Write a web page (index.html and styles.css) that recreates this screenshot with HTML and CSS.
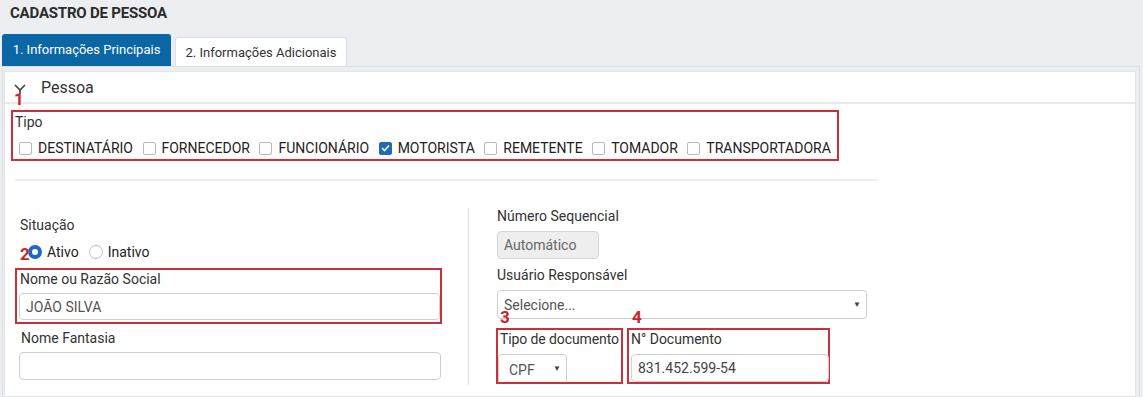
FILE: index.html
```html
<!DOCTYPE html>
<html lang="pt">
<head>
<meta charset="utf-8">
<link rel="stylesheet" href="styles.css">
</head>
<body>
<div class="title">CADASTRO DE PESSOA</div>
<div class="tabs">
  <div class="tab active">1. Informações Principais</div>
  <div class="tab">2. Informações Adicionais</div>
</div>
<div class="panel">
  <div class="card">
    <div class="card-header">
      <svg class="chev" width="12" height="10" viewBox="0 0 12 10"><path d="M1 1 L6 6 L11 1" fill="none" stroke="#444" stroke-width="1.6"/><path d="M6 6 V10" stroke="#444" stroke-width="1.6"/></svg>
      <span>Pessoa</span>
      <span class="mark m1">1</span>
    </div>
    <div class="card-body">
      <div class="box box-tipo">
        <div class="label">Tipo</div>
        <div class="checks">
          <label class="chk"><span class="cb"></span>DESTINATÁRIO</label>
          <label class="chk"><span class="cb"></span>FORNECEDOR</label>
          <label class="chk"><span class="cb"></span>FUNCIONÁRIO</label>
          <label class="chk"><span class="cb on"><svg width="9" height="8" viewBox="0 0 9 8"><path d="M1 4 L3.5 6.5 L8 1.5" fill="none" stroke="#fff" stroke-width="1.6"/></svg></span>MOTORISTA</label>
          <label class="chk"><span class="cb"></span>REMETENTE</label>
          <label class="chk"><span class="cb"></span>TOMADOR</label>
          <label class="chk"><span class="cb"></span>TRANSPORTADORA</label>
        </div>
      </div>
      <hr class="rule">
      <div class="cols">
        <div class="col-left">
          <div class="label lbl-sit">Situação</div>
          <div class="radios">
            <span class="mark m2">2</span>
            <label class="rad"><span class="rb on"></span>Ativo</label>
            <label class="rad"><span class="rb"></span>Inativo</label>
          </div>
          <div class="box box-nome">
            <div class="label">Nome ou Razão Social</div>
            <div class="input">JOÃO SILVA</div>
          </div>
          <div class="field-fant">
            <div class="label">Nome Fantasia</div>
            <div class="input"></div>
          </div>
        </div>
        <div class="col-right">
          <div class="label">Número Sequencial</div>
          <div class="input auto">Automático</div>
          <div class="label lbl-usr">Usuário Responsável</div>
          <div class="input select">Selecione...<span class="caret">▼</span>
            <span class="mark m3">3</span><span class="mark m4">4</span>
          </div>
          <div class="doc-row">
            <div class="box box-tipodoc">
              <div class="label">Tipo de documento</div>
              <div class="input select cpf">CPF<span class="caret">▼</span></div>
            </div>
            <div class="box box-ndoc">
              <div class="label">N° Documento</div>
              <div class="input ndoc">831.452.599-54</div>
            </div>
          </div>
        </div>
      </div>
    </div>
  </div>
</div>
</body>
</html>
```

FILE: styles.css
```css
* { box-sizing: border-box; }
body {
  margin: 0;
  background: #eceef2;
  font-family: Roboto, "Liberation Sans", sans-serif;
  color: #333;
  font-size: 14px;
  height: 397px;
  overflow: hidden;
}
.title {
  font-weight: 700;
  font-size: 15px;
  color: #2b2b2b;
  padding: 4px 0 0 10px;
  height: 34px;
  letter-spacing: -0.2px;
}
.tabs {
  display: flex;
  align-items: flex-end;
  gap: 4px;
  padding-left: 2px;
  height: 32px;
}
.tab {
  height: 29px;
  padding: 0 8px;
  display: flex;
  align-items: center;
  font-size: 13px;
  background: #fff;
  border: 1px solid #dcdfe3;
  border-bottom: none;
  border-radius: 3px 3px 0 0;
  color: #333;
  width: 172px;
  justify-content: center;
}
.tab.active {
  height: 32px;
  background: #0b66a6;
  border-color: #0b66a6;
  color: #fff;
  width: 169px;
  padding-bottom: 2px;
}
.panel {
  margin: 0 3px 0 2px;
  border: 1px solid #dcdfe3;
  border-bottom: none;
  padding: 4px 3px 0 1px;
  height: 331px;
}
.card {
  background: #fff;
  border: 1px solid #e3e5e9;
  height: 100%;
}
.card-header {
  position: relative;
  height: 32px;
  border-bottom: 2px solid #e8e9eb;
  display: flex;
  align-items: center;
  padding-left: 9px;
  font-size: 16px;
  color: #333;
}
.chev { margin: 4px 15px 0 0; }
.mark {
  position: absolute;
  color: #c9252f;
  font-weight: 700;
  font-size: 17px;
  line-height: 1;
}
.m1 { left: 9px; top: 19px; }
.card-body { padding: 6px 0 0 6px; }
.box {
  border: 2px solid #c9303a;
}
.box-tipo {
  width: 828px;
  height: 51px;
  padding: 2px 0 0 2px;
}
.label { font-size: 14px; color: #333; line-height: 16px; }
.checks {
  display: flex;
  gap: 9.5px;
  margin-top: 10px;
  padding-left: 4px;
}
.chk {
  display: flex;
  align-items: center;
  gap: 6px;
  font-size: 14px;
  color: #222;
}
.cb {
  width: 13px;
  height: 13px;
  border: 1px solid #b9b9b9;
  border-radius: 2px;
  display: flex;
  align-items: center;
  justify-content: center;
}
.cb.on { background: #1e6bb8; border-color: #1e6bb8; }
.rule {
  border: none;
  border-top: 2px solid #eeeff1;
  margin: 18px 0 0 4px;
  width: 863px;
}
.cols { display: flex; margin-top: 27px; }
.col-left {
  width: 458px;
  padding-left: 4px;
  border-right: 1px solid #e2e2e2;
  height: 177px;
}
.lbl-sit { padding: 9px 0 0 5px; }
.radios {
  position: relative;
  display: flex;
  gap: 10px;
  margin: 10px 0 0 13px;
  height: 17px;
  align-items: center;
}
.m2 { left: -8px; top: 3px; }
.rad { display: flex; align-items: center; gap: 5px; font-size: 14px; color: #222; }
.rb {
  width: 14px; height: 14px;
  border-radius: 50%;
  border: 1px solid #bdbdbd;
  background: #fff;
}
.rb.on { border: 4px solid #1e6bb8; }
.box-nome {
  width: 427px;
  height: 56px;
  margin-top: 8px;
  padding: 1px 0 0 3px;
}
.input {
  border: 1px solid #cfcfcf;
  border-radius: 4px;
  height: 27px;
  display: flex;
  align-items: center;
  padding-left: 6px;
  font-size: 14px;
  color: #555;
  background: #fff;
  position: relative;
}
.box-nome .input { width: 421px; margin-top: 6px; margin-left: -1px; }
.field-fant { padding: 6px 0 0 6px; }
.field-fant .label { margin-bottom: 6px; }
.field-fant .input { width: 422px; height: 28px; margin-left: -2px; }
.col-right { padding-left: 28px; }
.auto {
  width: 102px;
  height: 28px;
  margin-top: 7px;
  background: #eeeeee;
  border-color: #d6d6d6;
  color: #666;
}
.lbl-usr { margin-top: 8px; }
.select { width: 370px; height: 29px; margin-top: 7px; color: #555; }
.caret {
  position: absolute;
  right: 5px;
  top: 9px;
  font-size: 8px;
  color: #444;
}
.m3 { left: 2px; top: 18px; }
.m4 { left: 134px; top: 18px; }
.doc-row { display: flex; gap: 4px; margin-top: 9px; margin-left: -1px; }
.box-tipodoc {
  width: 127px;
  height: 56px;
  padding: 1px 0 0 2px;
  overflow: hidden;
}
.box-tipodoc .label { white-space: nowrap; letter-spacing: -0.1px; }
.cpf { width: 69px; height: 32px; margin-top: 7px; margin-left: -2px; padding-left: 10px; }
.box-ndoc {
  width: 203px;
  height: 56px;
  padding: 1px 0 0 2px;
}
.ndoc { width: 198px; height: 28px; margin-top: 7px; color: #444; }
```
